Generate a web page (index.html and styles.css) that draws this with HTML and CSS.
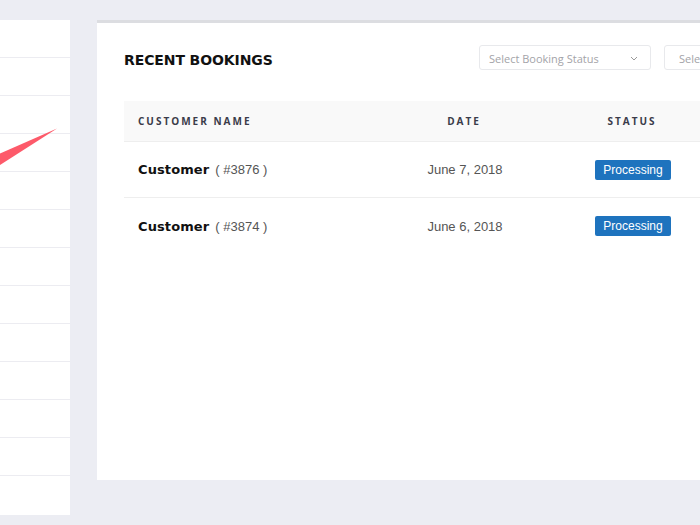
FILE: index.html
```html
<!DOCTYPE html>
<html>
<head>
<meta charset="utf-8">
<link rel="stylesheet" href="styles.css">
</head>
<body>
<div class="layout">
  <div class="chart-card">
    <div class="grid-line"></div><div class="grid-line"></div><div class="grid-line"></div>
    <div class="grid-line"></div><div class="grid-line"></div><div class="grid-line"></div>
    <div class="grid-line"></div><div class="grid-line"></div><div class="grid-line"></div>
    <div class="grid-line"></div><div class="grid-line"></div><div class="grid-line"></div>
    <svg class="chart-svg" width="70" height="495" viewBox="0 0 70 495">
      <polygon points="0,133.5 57,108.5 0,145" fill="#fd5a6a"/>
    </svg>
  </div>
  <div class="bookings">
    <div class="top-bar">
      <h2 class="title">RECENT BOOKINGS</h2>
      <div class="filters">
        <div class="select select-status">
          <span>Select Booking Status</span>
          <svg class="chev" width="8" height="5" viewBox="0 0 8 5"><path d="M1 1 L4 4 L7 1" fill="none" stroke="#9a9a9a" stroke-width="1"/></svg>
        </div>
        <div class="select select-other">
          <span>Select</span>
        </div>
      </div>
    </div>
    <div class="table">
      <div class="row head">
        <div class="cell c-name">CUSTOMER NAME</div>
        <div class="cell c-date">DATE</div>
        <div class="cell c-status">STATUS</div>
        <div class="cell c-extra"></div>
      </div>
      <div class="row body-row">
        <div class="cell c-name"><span class="cust">Customer</span><span class="cid">( #3876 )</span></div>
        <div class="cell c-date">June 7, 2018</div>
        <div class="cell c-status"><span class="badge">Processing</span></div>
        <div class="cell c-extra"></div>
      </div>
      <div class="row body-row last">
        <div class="cell c-name"><span class="cust">Customer</span><span class="cid">( #3874 )</span></div>
        <div class="cell c-date">June 6, 2018</div>
        <div class="cell c-status"><span class="badge">Processing</span></div>
        <div class="cell c-extra"></div>
      </div>
    </div>
  </div>
</div>
</body>
</html>
```

FILE: styles.css
```css
html, body {
  margin: 0;
  padding: 0;
}
body {
  background: #ecedf3;
  width: 700px;
  height: 525px;
  overflow: hidden;
  font-family: "Liberation Sans", Arial, sans-serif;
}
.layout {
  display: flex;
  align-items: flex-start;
  gap: 27px;
  padding-top: 20px;
}
.chart-card {
  flex: none;
  width: 70px;
  height: 495px;
  background: #fff;
  position: relative;
  display: flex;
  flex-direction: column;
}
.grid-line {
  height: 37px;
  border-bottom: 1px solid #ececf1;
  flex: none;
}
.chart-svg {
  position: absolute;
  left: 0;
  top: 0;
}
.bookings {
  flex: none;
  width: 766px;
  height: 460px;
  box-sizing: border-box;
  background: #fff;
  border-top: 3px solid #dcdde1;
  padding: 22px 27px 0;
}
.top-bar {
  display: flex;
  align-items: center;
  justify-content: space-between;
  height: 25px;
}
.title {
  margin: 0;
  font-family: "DejaVu Sans", sans-serif;
  font-weight: bold;
  font-size: 14px;
  color: #111;
  letter-spacing: -0.1px;
  position: relative;
  top: 2px;
}
.filters {
  display: flex;
  gap: 13px;
}
.select {
  box-sizing: border-box;
  width: 172px;
  height: 25px;
  border: 1px solid #e8e9ec;
  border-radius: 3px;
  padding: 1px 10px 0 9px;
  display: flex;
  align-items: center;
  justify-content: space-between;
  font-family: "Open Sans", sans-serif;
  font-size: 11px;
  color: #a3a3a8;
}
.select-other {
  padding-left: 14px;
}
.chev {
  margin-right: 2px;
}
.table {
  margin-top: 31px;
}
.row {
  display: grid;
  grid-template-columns: 276px 128px 208px 100px;
}
.head {
  background: #f9f9f9;
  height: 41px;
  box-sizing: border-box;
  border-bottom: 1px solid #eeeeee;
  font-family: "Open Sans", sans-serif;
  font-weight: bold;
  font-size: 10px;
  letter-spacing: 2px;
  color: #3b3c4a;
}
.cell {
  display: flex;
  align-items: center;
}
.c-name {
  padding-left: 14px;
}
.c-date, .c-status, .c-extra {
  justify-content: center;
}
.body-row {
  height: 56px;
  box-sizing: border-box;
  border-bottom: 1px solid #eeeeee;
}
.body-row.last {
  border-bottom: none;
}
.cust {
  font-family: "DejaVu Sans", sans-serif;
  font-weight: bold;
  font-size: 13px;
  color: #111;
  letter-spacing: 0.1px;
}
.cid {
  margin-left: 6px;
  font-size: 13px;
  color: #555;
}
.body-row .c-date {
  font-size: 13px;
  color: #555;
  padding-left: 2px;
}
.badge {
  display: inline-block;
  background: #1e73be;
  color: #fff;
  font-size: 12px;
  line-height: 20px;
  height: 20px;
  padding: 0 8px;
  border-radius: 2px;
  margin-left: 2px;
}
```
